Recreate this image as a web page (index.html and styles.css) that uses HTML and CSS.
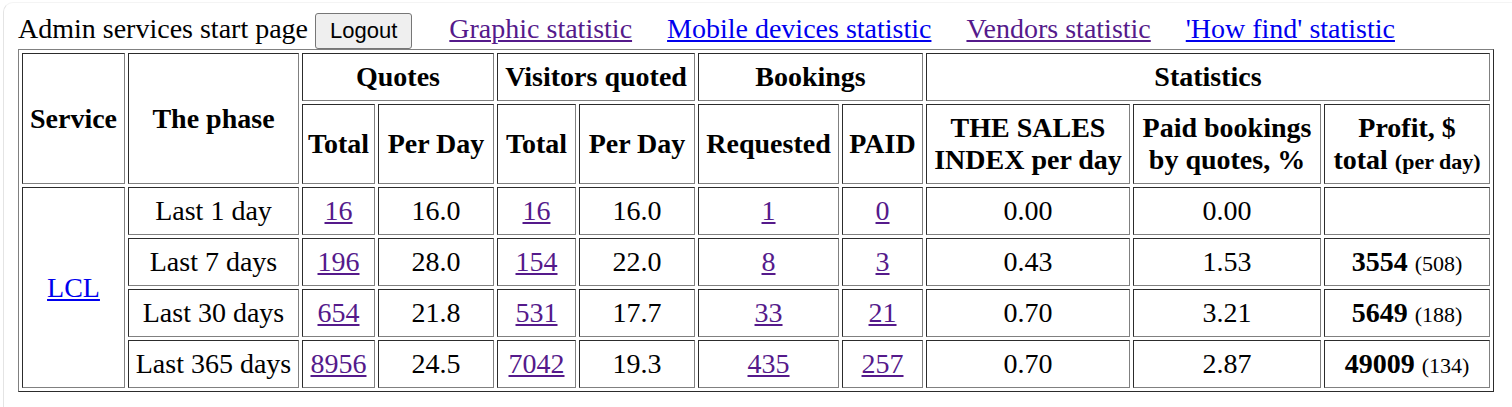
FILE: index.html
```html
<!DOCTYPE html>
<html>
<head>
<meta charset="utf-8">
<title>Admin services start page</title>
<link rel="stylesheet" href="styles.css">
</head>
<body>
<div class="frame">
  <div class="topbar">
    <span class="title">Admin services start page</span>
    <button class="logout">Logout</button>
    <a class="navlink visited" href="#graphic">Graphic statistic</a>
    <a class="navlink" href="#mobile">Mobile devices statistic</a>
    <a class="navlink visited" href="#vendors">Vendors statistic</a>
    <a class="navlink" href="#howfind">'How find' statistic</a>
  </div>
  <table class="stats">
    <colgroup>
      <col class="c-service">
      <col class="c-phase">
      <col class="c-qtotal">
      <col class="c-qday">
      <col class="c-vtotal">
      <col class="c-vday">
      <col class="c-req">
      <col class="c-paid">
      <col class="c-index">
      <col class="c-pct">
      <col class="c-profit">
    </colgroup>
    <thead>
      <tr>
        <th rowspan="2">Service</th>
        <th rowspan="2">The phase</th>
        <th colspan="2">Quotes</th>
        <th colspan="2">Visitors quoted</th>
        <th colspan="2">Bookings</th>
        <th colspan="3">Statistics</th>
      </tr>
      <tr>
        <th>Total</th>
        <th>Per Day</th>
        <th>Total</th>
        <th>Per Day</th>
        <th>Requested</th>
        <th>PAID</th>
        <th>THE SALES INDEX per day</th>
        <th>Paid bookings by quotes, %</th>
        <th>Profit, $ total <span class="small">(per day)</span></th>
      </tr>
    </thead>
    <tbody>
      <tr>
        <td rowspan="4"><a class="link" href="#lcl">LCL</a></td>
        <td>Last 1 day</td>
        <td><a class="link visited" href="#q1">16</a></td>
        <td>16.0</td>
        <td><a class="link visited" href="#v1">16</a></td>
        <td>16.0</td>
        <td><a class="link visited" href="#r1">1</a></td>
        <td><a class="link visited" href="#p1">0</a></td>
        <td>0.00</td>
        <td>0.00</td>
        <td></td>
      </tr>
      <tr>
        <td>Last 7 days</td>
        <td><a class="link visited" href="#q7">196</a></td>
        <td>28.0</td>
        <td><a class="link visited" href="#v7">154</a></td>
        <td>22.0</td>
        <td><a class="link visited" href="#r7">8</a></td>
        <td><a class="link visited" href="#p7">3</a></td>
        <td>0.43</td>
        <td>1.53</td>
        <td><b>3554</b> <span class="perday">(508)</span></td>
      </tr>
      <tr>
        <td>Last 30 days</td>
        <td><a class="link visited" href="#q30">654</a></td>
        <td>21.8</td>
        <td><a class="link visited" href="#v30">531</a></td>
        <td>17.7</td>
        <td><a class="link visited" href="#r30">33</a></td>
        <td><a class="link visited" href="#p30">21</a></td>
        <td>0.70</td>
        <td>3.21</td>
        <td><b>5649</b> <span class="perday">(188)</span></td>
      </tr>
      <tr>
        <td>Last 365 days</td>
        <td><a class="link visited" href="#q365">8956</a></td>
        <td>24.5</td>
        <td><a class="link visited" href="#v365">7042</a></td>
        <td>19.3</td>
        <td><a class="link visited" href="#r365">435</a></td>
        <td><a class="link visited" href="#p365">257</a></td>
        <td>0.70</td>
        <td>2.87</td>
        <td><b>49009</b> <span class="perday">(134)</span></td>
      </tr>
    </tbody>
  </table>
</div>
</body>
</html>
```
FILE: styles.css
```css
html, body {
  margin: 0;
  padding: 0;
  background: #ffffff;
}

body {
  font-family: "Liberation Serif", "Times New Roman", serif;
  font-size: 28px;
  color: #000000;
}

.frame {
  margin: 2px 0 0 3px;
  padding: 10px 18px 0 14px;
  border-top: 1px solid #f4f4f4;
  border-left: 1px solid #e4e4e4;
  border-top-left-radius: 10px;
  min-height: 400px;
}

.topbar {
  display: flex;
  align-items: baseline;
  height: 36px;
  white-space: nowrap;
}

.title {
  margin-right: 7px;
}

.logout {
  font-family: "Liberation Sans", Arial, sans-serif;
  font-size: 22px;
  color: #000000;
  background: #efefef;
  border: 1px solid #767676;
  border-radius: 3px;
  padding: 4px 14px;
}

.navlink {
  margin-left: 35px;
  color: #0000ee;
  text-decoration: underline;
}

.navlink:first-of-type {
  margin-left: 37px;
}

.visited {
  color: #551a8b;
}

.link {
  color: #0000ee;
  text-decoration: underline;
}

.link.visited {
  color: #551a8b;
}

.stats {
  width: 100%;
  table-layout: fixed;
  border: 1px outset #808080;
  border-spacing: 3px;
  border-collapse: separate;
  font-family: "Liberation Serif", "Times New Roman", serif;
  font-size: 28px;
}

.c-service { width: 103px; }
.c-phase   { width: 171px; }
.c-qtotal  { width: 73px; }
.c-qday    { width: 116px; }
.c-vtotal  { width: 79px; }
.c-vday    { width: 116px; }
.c-req     { width: 141px; }
.c-paid    { width: 81px; }
.c-index   { width: 204px; }
.c-pct     { width: 188px; }
.c-profit  { width: 166px; }

.stats th,
.stats td {
  font-family: "Liberation Serif", "Times New Roman", serif;
  border: 1px inset #808080;
  padding: 7px 4px;
  text-align: center;
  vertical-align: middle;
}

.stats th {
  font-weight: bold;
}

.small {
  font-size: 22px;
}

.perday {
  font-size: 22px;
}
```
